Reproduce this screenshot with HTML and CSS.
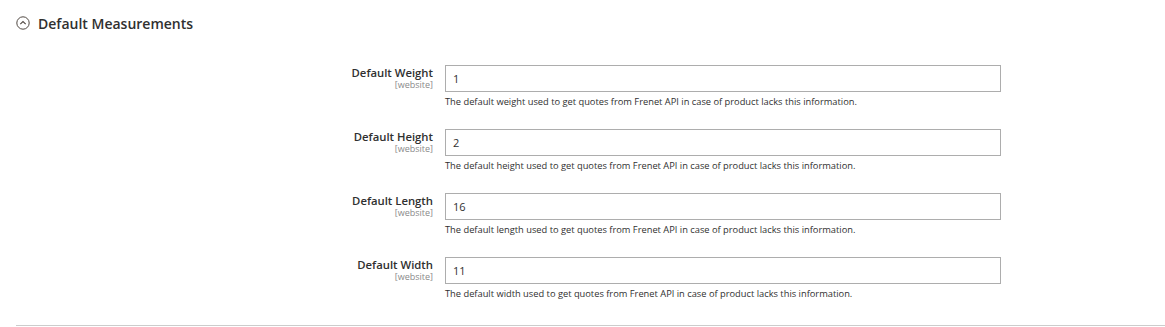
FILE: index.html
```html
<!DOCTYPE html>
<html>
<head>
  <meta charset="UTF-8">
  <title>Default Measurements</title>
  <link rel="stylesheet" href="styles.css">
</head>
<body>
  <div class="section">
    <div class="section-head">
      <svg class="toggle" width="14" height="14" viewBox="0 0 14 14">
        <circle cx="7" cy="7" r="6.2" fill="none" stroke="#514943" stroke-width="1"/>
        <path d="M4.3 8.2 L7 5.5 L9.7 8.2" fill="none" stroke="#514943" stroke-width="1.1"/>
      </svg>
      <span class="title">Default Measurements</span>
    </div>

    <div class="fields">
      <div class="row">
        <div class="label">
          <span class="name">Default Weight</span>
          <span class="scope">[website]</span>
        </div>
        <div class="value">
          <input type="text" value="1">
          <p class="note">The default weight used to get quotes from Frenet API in case of product lacks this information.</p>
        </div>
      </div>

      <div class="row">
        <div class="label">
          <span class="name">Default Height</span>
          <span class="scope">[website]</span>
        </div>
        <div class="value">
          <input type="text" value="2">
          <p class="note">The default height used to get quotes from Frenet API in case of product lacks this information.</p>
        </div>
      </div>

      <div class="row">
        <div class="label">
          <span class="name">Default Length</span>
          <span class="scope">[website]</span>
        </div>
        <div class="value">
          <input type="text" value="16">
          <p class="note">The default length used to get quotes from Frenet API in case of product lacks this information.</p>
        </div>
      </div>

      <div class="row">
        <div class="label">
          <span class="name">Default Width</span>
          <span class="scope">[website]</span>
        </div>
        <div class="value">
          <input type="text" value="11">
          <p class="note">The default width used to get quotes from Frenet API in case of product lacks this information.</p>
        </div>
      </div>
    </div>
  </div>
</body>
</html>
```

FILE: styles.css
```css
body {
  margin: 0;
  font-family: "Open Sans", "Liberation Sans", sans-serif;
  color: #303030;
  background: #fff;
}
.section {
  margin: 0 0 0 16px;
  border-bottom: 1px solid #cccccc;
  height: 326px;
  box-sizing: border-box;
}
.section-head {
  display: flex;
  align-items: center;
  gap: 8px;
  padding-top: 13px;
  height: 20px;
}
.toggle {
  display: block;
}
.title {
  font-size: 14px;
  font-weight: 600;
  color: #303030;
}
.fields {
  padding-top: 32px;
}
.row {
  display: flex;
  height: 64px;
}
.label {
  width: 417px;
  display: flex;
  flex-direction: column;
  align-items: flex-end;
  padding-top: 1px;
}
.name {
  font-size: 11.3px;
  font-weight: 600;
  line-height: 14px;
}
.scope {
  font-size: 9px;
  color: #8a8a8a;
  line-height: 9px;
}
.value {
  margin-left: 12px;
  width: 556px;
}
input {
  width: 100%;
  height: 27px;
  box-sizing: border-box;
  border: 1px solid #adadad;
  padding: 0 7px;
  font-family: "Open Sans", "Liberation Sans", sans-serif;
  font-size: 11px;
  color: #303030;
  margin: 0;
  display: block;
}
.note {
  margin: 3px 0 0 0;
  font-size: 9.3px;
  line-height: 13px;
  color: #303030;
}
```
